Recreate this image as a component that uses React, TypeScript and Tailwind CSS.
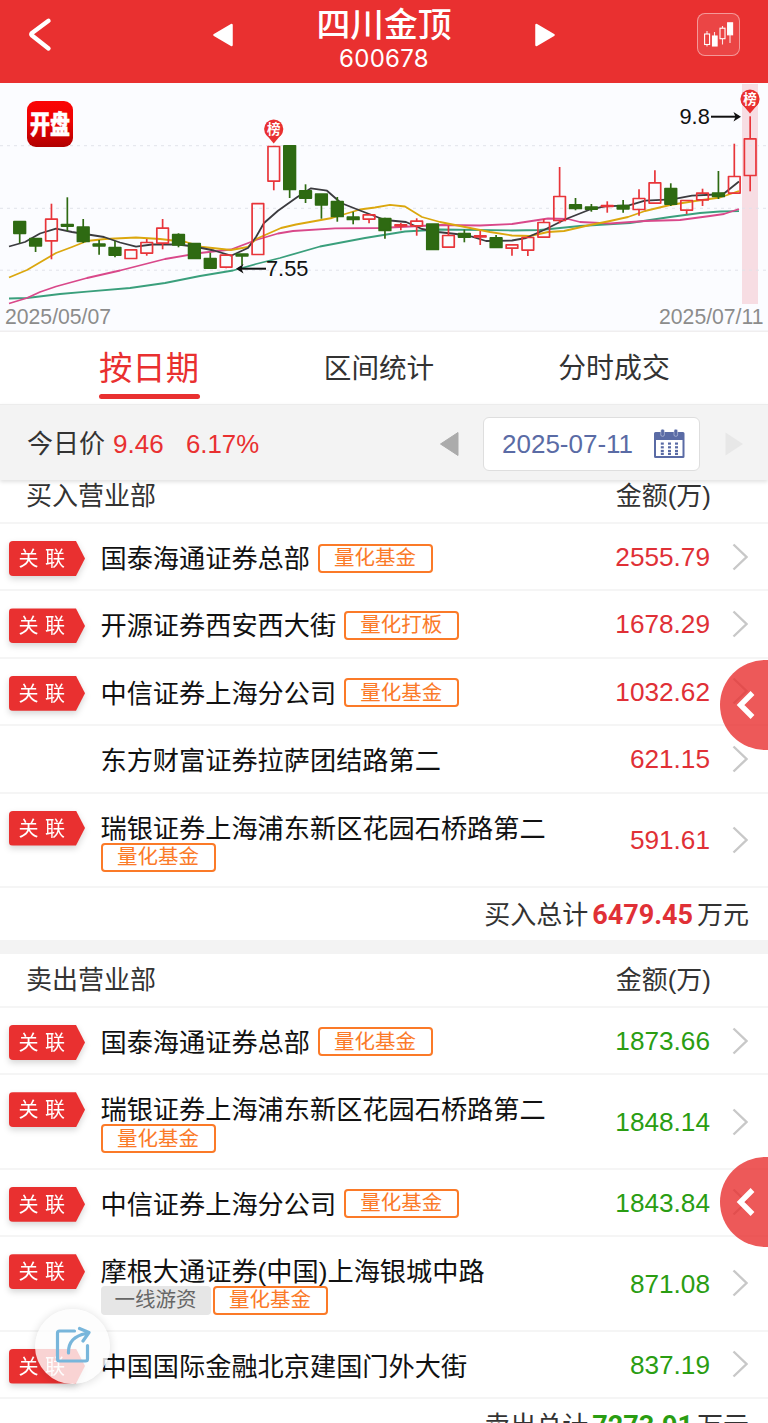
import clsx from "clsx";

type Candle = {
  up: boolean;
  top: number;
  bottom: number;
  high: number;
  low: number;
};

type Tag = { label: string; muted?: boolean };

type Seat = {
  name: string;
  amount: string;
  linked?: boolean;
  tags?: Tag[];
  tall?: boolean;
};

const quant: Tag = { label: "量化基金" };

const buySeats: Seat[] = [
  { name: "国泰海通证券总部", amount: "2555.79", linked: true, tags: [quant] },
  { name: "开源证券西安西大街", amount: "1678.29", linked: true, tags: [{ label: "量化打板" }] },
  { name: "中信证券上海分公司", amount: "1032.62", linked: true, tags: [quant] },
  { name: "东方财富证券拉萨团结路第二", amount: "621.15" },
  { name: "瑞银证券上海浦东新区花园石桥路第二", amount: "591.61", linked: true, tags: [quant], tall: true },
];

const sellSeats: Seat[] = [
  { name: "国泰海通证券总部", amount: "1873.66", linked: true, tags: [quant] },
  { name: "瑞银证券上海浦东新区花园石桥路第二", amount: "1848.14", linked: true, tags: [quant], tall: true },
  { name: "中信证券上海分公司", amount: "1843.84", linked: true, tags: [quant] },
  {
    name: "摩根大通证券(中国)上海银城中路",
    amount: "871.08",
    linked: true,
    tags: [{ label: "一线游资", muted: true }, quant],
    tall: true,
  },
  { name: "中国国际金融北京建国门外大街", amount: "837.19", linked: true },
];

// [up, body top, body bottom, high, low]
const rawCandles: [number, number, number, number, number][] = [
  [0, 221.5, 233.5, 221.5, 243],
  [0, 238.3, 246, 238, 252],
  [1, 219, 241, 203.7, 259.3],
  [0, 224.3, 226.3, 197.3, 231],
  [0, 227, 241.7, 219, 243],
  [0, 244, 246, 240, 254.7],
  [0, 247.3, 255.3, 241, 257.3],
  [1, 249.7, 258.7, 249.7, 258.7],
  [1, 242.3, 253.3, 239, 255.7],
  [1, 228, 243.3, 219, 249.3],
  [0, 234.3, 245, 233.3, 247.3],
  [0, 243.3, 258.7, 243.3, 258.7],
  [0, 258.3, 268.3, 252.7, 268.3],
  [1, 255, 267.3, 255, 268.3],
  [0, 254, 256, 254, 265],
  [1, 203.5, 254.7, 203.5, 254.7],
  [1, 146.3, 181.3, 146.3, 190.3],
  [0, 145.7, 189.7, 145.7, 198],
  [0, 190.7, 198.3, 184.3, 203],
  [0, 194, 205, 194, 218.7],
  [0, 201.3, 216.7, 197, 221.7],
  [0, 217, 219.7, 211.7, 224.3],
  [1, 214.7, 219.3, 214.7, 223.3],
  [0, 218.3, 230.7, 217.7, 238.7],
  [1, 224.7, 226, 223, 230.3],
  [1, 221, 226, 218.3, 235.7],
  [0, 224, 249.7, 224, 249.7],
  [1, 235.3, 247.3, 225.7, 247.3],
  [0, 233.3, 237.3, 229.7, 242.3],
  [1, 235.7, 237, 231, 245],
  [0, 237.7, 247.7, 235, 248],
  [1, 244.6, 248.4, 244.6, 255.7],
  [1, 237.3, 250.3, 237.3, 256],
  [1, 222.3, 237.3, 219, 237.3],
  [1, 196.3, 220.7, 167, 223.3],
  [0, 204.7, 208.7, 198, 210.3],
  [0, 207, 209.3, 204, 211.7],
  [1, 205.3, 206.5, 201.3, 212.7],
  [0, 205.3, 209, 200, 212.7],
  [1, 198.3, 209.7, 189.3, 215.7],
  [1, 182.7, 203.3, 170.3, 203.3],
  [0, 188.3, 204.3, 183.3, 206],
  [1, 200.3, 210.3, 200, 214],
  [1, 193, 200, 188.7, 206],
  [0, 193, 196.7, 171, 199],
  [1, 176.3, 193.3, 143.7, 193.3],
  [1, 138.7, 175.7, 116.3, 191.3],
];

const candles: Candle[] = rawCandles.map(([up, top, bottom, high, low]) => ({
  up: up === 1,
  top,
  bottom,
  high,
  low,
}));

const averages = [
  {
    color: "#3a9f7c",
    points:
      "9,298.5 27,298 60,294 87,291.7 130,288 165,283 200,276 233,270.5 256,264 280,258 320,246.5 365,238 405,231.5 440,229.5 512,230.5 540,230 580,226 630,223 670,217 700,213 720,211.5 739,211.2",
  },
  {
    color: "#d9488a",
    points:
      "9,303.5 27,298 40,292 56,286.5 87,278 120,270.5 165,259 200,253 231,249.5 256,240 278,233.5 293,231 335,228.3 380,228 420,226 440,225 480,225.5 512,224 548,218.5 568,219 580,222 610,223.5 645,221 680,220 710,216 724,214 739,209",
  },
  {
    color: "#dba70e",
    points:
      "9,277.5 27,270 56,253 72,247 87,241 105,239 136,237.5 160,239 186,242 203,247 231,250 248,247 256,239 281,228 296,224.5 332,218 360,209.5 375,207.5 390,204.8 405,206.5 422,217 440,222 465,227 490,232 512,235.5 530,236 548,232 564,231 590,225 610,221 628,217 645,211 670,205 695,201 720,197.5 739,191",
  },
  {
    color: "#3b3b3f",
    points:
      "9,246.5 25,242 40,233.5 56,228.7 72,232 104,237 120,242.5 136,246.7 152,244.5 178,244.5 194,246.5 214,250.5 231,255.7 248,248 256,237 264,223 278,210.7 297,197.3 311,188.3 327,190.7 341,203 360,210.5 385,220 406,222 422,229 438,232 456,234 472,236.7 486,241 512,240.5 526,238 544,230 566,219 590,209.5 605,206.3 629,205.3 645,200.7 672,199.3 692,195.7 716,194.5 724,193.5 739,181.5",
  },
];

function BoardPin({ x, y }: { x: number; y: number }) {
  return (
    <g>
      <path
        d={`M${x - 8} ${y + 5} L${x} ${y + 14.5} L${x + 8} ${y + 5} Z`}
        fill="#e93030"
      />
      <circle cx={x} cy={y} r="9.6" fill="#e93030" />
      <text x={x} y={y + 5} textAnchor="middle" fontSize="13.5" fontWeight="700" fill="#fff">
        榜
      </text>
    </g>
  );
}

function KLineChart() {
  return (
    <svg
      viewBox="0 83 768 249"
      className="block h-[249px] w-full bg-[#fbfcff] font-['Liberation_Sans','Noto_Sans_CJK_SC',sans-serif]"
    >
      <defs>
        <linearGradient id="logo" x1="0" y1="0" x2="0" y2="1">
          <stop offset="0" stopColor="#fb0505" />
          <stop offset="0.45" stopColor="#ee0303" />
          <stop offset="1" stopColor="#b00000" />
        </linearGradient>
      </defs>

      <rect x="742" y="84" width="16" height="220" fill="#f7dde3" />
      {[145.7, 208.3, 270.2].map((y) => (
        <line key={y} x1="0" x2="768" y1={y} y2={y} stroke="#e1e3ea" strokeDasharray="3 4" />
      ))}

      {averages.map((line) => (
        <polyline
          key={line.color}
          points={line.points}
          fill="none"
          stroke={line.color}
          strokeWidth="1.8"
          strokeLinejoin="round"
        />
      ))}

      {candles.map((c, i) => {
        const x = 19.7 + i * 15.88;
        const color = c.up ? "#e8353a" : "#2e6a12";
        return (
          <g key={i} stroke={color} strokeWidth="1.7" strokeLinejoin="round">
            {c.high < c.top && <line x1={x} x2={x} y1={c.high} y2={c.top} />}
            {c.low > c.bottom && <line x1={x} x2={x} y1={c.bottom} y2={c.low} />}
            <rect
              x={x - 5.8}
              y={c.top + 0.2}
              width="11.6"
              height={Math.max(c.bottom - c.top - 0.4, 0.8)}
              fill={c.up ? "none" : color}
            />
          </g>
        );
      })}

      <rect x="27" y="101" width="46" height="46" rx="9" fill="url(#logo)" />
      <text
        x="30"
        y="133.8"
        fontSize="26"
        fontWeight="900"
        fill="#fff"
        stroke="#fff"
        strokeWidth="0.5"
        textLength="40"
        lengthAdjust="spacingAndGlyphs"
      >
        开盘
      </text>

      <BoardPin x={273.7} y={129} />
      <BoardPin x={750} y={99} />

      <g stroke="#111" strokeWidth="2" fill="none">
        <path d="M711 116.7 H739" />
        <path d="M266 268.7 H238" />
      </g>
      <path d="M733.5 112 L741 116.7 L733.5 121.4 L735.5 116.7 Z" fill="#111" />
      <path d="M243.5 264 L236 268.7 L243.5 273.4 L241.5 268.7 Z" fill="#111" />
      <g fontSize="21.8" fill="#111">
        <text x="679.5" y="124">9.8</text>
        <text x="266" y="276">7.55</text>
      </g>
      <g fontSize="21.2" fill="#8c8c8c">
        <text x="5" y="324">2025/05/07</text>
        <text x="763.5" y="324" textAnchor="end">2025/07/11</text>
      </g>
      <line x1="0" x2="768" y1="331.3" y2="331.3" stroke="#f0eeef" strokeWidth="1.4" />
    </svg>
  );
}

function Header() {
  return (
    <header className="grid h-[83px] grid-cols-[200px_1fr_200px] bg-[#e93030] text-white">
      <button className="flex items-start pt-[17px] pl-[27px]">
        <svg width="26" height="35" viewBox="0 0 26 35" fill="none" stroke="#fff" strokeWidth="4.4" strokeLinecap="round" strokeLinejoin="round">
          <path d="M21.5 3.8 L5 16 Q3.5 17.300 5 18.600 L21.5 31.5" />
        </svg>
      </button>
      <div className="flex justify-between px-[13px]">
        <svg width="20" height="24" viewBox="0 0 20 24" className="mt-[23px]">
          <path d="M1.5 12 L18.5 2 V22 Z" fill="#fff" stroke="#fff" strokeWidth="2.5" strokeLinejoin="round" />
        </svg>
        <div className="flex flex-col items-center text-center">
          <h1 className="mt-[3px] h-[42px] text-[33.8px] leading-[44px] font-medium">四川金顶</h1>
          <span className="h-6 font-['Inter','Liberation_Sans',sans-serif] text-[24px] leading-[27px] tracking-[0.3px]">
            600678
          </span>
        </div>
        <svg width="20" height="24" viewBox="0 0 20 24" className="mt-[23px]">
          <path d="M18.5 12 L1.5 2 V22 Z" fill="#fff" stroke="#fff" strokeWidth="2.5" strokeLinejoin="round" />
        </svg>
      </div>
      <div className="flex justify-end pt-[13px] pr-[28px]">
        <div className="h-[43px] w-[43px] rounded-lg border border-white/45 bg-white/10">
          <svg width="41" height="41" viewBox="0 0 41 41" stroke="#fff" strokeWidth="1.1">
            <path d="M9 17 V20 M9 31 V32.5 M16.5 18 V22 M24.5 12 V14 M24.5 25 V30.5 M32 21 V29" opacity=".85" />
            <rect x="6.6" y="20" width="5" height="10.5" fill="none" />
            <rect x="14.5" y="22" width="4.6" height="10" fill="#fff" />
            <rect x="22" y="14.2" width="5" height="10.5" fill="none" />
            <rect x="29.6" y="8.8" width="5" height="12" fill="#fff" />
          </svg>
        </div>
      </div>
    </header>
  );
}

function Tabs() {
  return (
    <nav className="flex h-[72px] text-[#333]">
      <div className="flex w-[298px] justify-center">
        <div className="h-[67px] w-[101px] text-center text-[33.4px] leading-[73px] whitespace-nowrap text-[#e93030]">
          <div className="h-[62px]">按日期</div>
          <div className="h-[5px] rounded-full bg-[#e93030]" />
        </div>
      </div>
      <div className="w-[162px] text-center text-[27.6px] leading-[74px]">区间统计</div>
      <div className="w-[308px] text-center text-[27.9px] leading-[74px]">分时成交</div>
    </nav>
  );
}

function CalendarIcon() {
  return (
    <svg width="32" height="30" viewBox="0 0 32 30" fill="#5a6ba5">
      <path fillRule="evenodd" d="M2.5 3 H30 Q31.5 3 31.5 4.5 V27.500 Q31.5 29 30 29 H2.5 Q1 29 1 27.500 V4.5 Q1 3 2.5 3 Z M3 11 V27 H29.5 V11 Z" />
      <rect x="7.8" y="0.3" width="3.6" height="7" rx="1.5" stroke="#dfe3f0" strokeWidth="0.5" />
      <rect x="21" y="0.3" width="3.6" height="7" rx="1.5" stroke="#dfe3f0" strokeWidth="0.5" />
      {[7.8, 15, 22].map((x) =>
        [13.5, 17.2, 20.9, 23.800].map((y) => (
          <rect key={`${x}-${y}`} x={x} y={y} width="3" height="2.2" />
        ))
      )}
    </svg>
  );
}

function DateBar() {
  return (
    <div className="relative z-10 flex h-[76px] items-center border-t border-[#ececec] bg-[#f3f3f3] pt-0.5 pl-[27px] shadow-[0_2px_4px_rgba(0,0,0,0.12)]">
      <span className="w-[86px] pt-0.5 text-[26px] text-[#333]">今日价</span>
      <span className="w-[73px] pt-0.5 text-[26px] text-[#e93030]">9.46</span>
      <span className="w-[253px] pt-0.5 text-[25.8px] text-[#e93030]">6.17%</span>
      <svg width="20" height="26" viewBox="0 0 20 26">
        <path d="M1.5 13 L19 1.5 V24.5 Z" fill="#ababab" stroke="#ababab" strokeLinejoin="round" />
      </svg>
      <div className="ml-[24px] flex h-[54px] w-[217px] items-center justify-between rounded-md border-[1.5px] border-[#dedede] bg-white pr-[14px] pl-[18px]">
        <span className="pt-0.5 text-[26px] text-[#5a6ba5]">2025-07-11</span>
        <CalendarIcon />
      </div>
      <svg width="20" height="26" viewBox="0 0 20 26" className="ml-[24px]">
        <path d="M19 13 L1.5 1.5 V24.5 Z" fill="#e7e7e7" />
      </svg>
    </div>
  );
}

function SectionTitle({ title, className }: { title: string; className?: string }) {
  return (
    <div
      className={clsx(
        "flex h-[54px] justify-between border-b-2 border-[#f5f5f5] pr-[57px] pl-[26px] text-[26px] leading-[52px] text-[#333]",
        className
      )}
    >
      <span>{title}</span>
      <span>金额(万)</span>
    </div>
  );
}

function LinkedBadge() {
  return (
    <div className="mt-[17px] h-[35px] w-[76px] drop-shadow-[0_3px_3px_rgba(0,0,0,0.16)]">
      <div className="h-full rounded-l bg-[#e93030] pl-[9.5px] text-[20px] leading-[36px] tracking-[6.5px] whitespace-nowrap text-white [clip-path:polygon(0_0,67px_0,100%_50%,67px_100%,0_100%)]">
        关联
      </div>
    </div>
  );
}

function TagLabel({ tag }: { tag: Tag }) {
  return (
    <span
      className={clsx(
        "flex h-[29px] items-center justify-center rounded text-[20.5px] leading-none",
        tag.muted ? "w-[110px] bg-[#e6e6e6] text-[#666]" : "w-[115px] border-2 border-[#fb7a28] bg-white text-[#fb7a28]"
      )}
    >
      {tag.label}
    </span>
  );
}

function SeatRow({ seat, sell }: { seat: Seat; sell?: boolean }) {
  return (
    <div
      className={clsx(
        "flex border-b-2 border-[#f5f5f5] pr-[20px] pl-[9px]",
        seat.tall ? "h-[94.4px]" : "h-[67.4px]"
      )}
    >
      <div className="w-[91.5px]">{seat.linked && <LinkedBadge />}</div>
      <div className="flex w-[480px] flex-wrap content-start items-center gap-x-[7.5px] pt-[19px]">
        <span className="h-[30px] text-[26.2px] leading-[32px] whitespace-nowrap text-[#111]">{seat.name}</span>
        {seat.tags && (
          <div className="flex gap-[2px]">
            {seat.tags.map((tag) => (
              <TagLabel key={tag.label} tag={tag} />
            ))}
          </div>
        )}
      </div>
      <div className="flex flex-1 items-center justify-end">
        <span className={clsx("pt-0.5 text-[26.2px]", sell ? "text-[#2a9d12]" : "text-[#e03036]")}>{seat.amount}</span>
        <svg width="16" height="28" viewBox="0 0 16 28" className="ml-[22px]" fill="none" stroke="#c8c8c8" strokeWidth="2.4">
          <path d="M1.5 1.5 L14.5 14 L1.5 26.5" />
        </svg>
      </div>
    </div>
  );
}

function Total({ label, value, sell }: { label: string; value: string; sell?: boolean }) {
  return (
    <div className="flex h-[52px] items-center justify-end pt-[3px] pr-[19px] text-[26px] text-[#333]">
      <span>{label}</span>
      <span
        className={clsx(
          "mx-[4px] font-['Roboto','Liberation_Sans',sans-serif] text-[27px] font-bold",
          sell ? "text-[#2a9d12]" : "text-[#e03036]"
        )}
      >
        {value}
      </span>
      <span>万元</span>
    </div>
  );
}

function SideHandle({ className }: { className: string }) {
  return (
    <button
      className={clsx("absolute left-[720px] z-20 h-[90px] w-[90px] rounded-full bg-[#e93030]/80", className)}
    >
      <svg width="20" height="30" viewBox="0 0 20 30" className="ml-[16px]" fill="none" stroke="#fff" strokeWidth="5.4">
        <path d="M16.5 3 L4.5 15 L16.5 27" />
      </svg>
    </button>
  );
}

function ShareButton() {
  return (
    <button className="absolute top-[1309px] left-[35px] z-20 flex h-[75px] w-[75px] items-center justify-center rounded-full bg-[#fcfcfc]/80 shadow-[0_1px_10px_rgba(0,0,0,0.14)]">
      <svg width="36" height="38" viewBox="0 0 36 38" className="-mt-1" fill="none" stroke="#78b6db" strokeWidth="3.2" strokeLinecap="round" strokeLinejoin="round">
        <path d="M19.5 5 H4.5 Q2.5 5 2.5 7 V33 Q2.5 35 4.5 35 H30.5 Q32.5 35 32.5 33 V19.5" />
        <path d="M13.5 27 Q13 11 31 7.5 M24.5 2.5 L34 6.5 L28 15" />
      </svg>
    </button>
  );
}

export default function App() {
  return (
    <div className="relative h-[1423px] w-[768px] overflow-hidden bg-white font-['Liberation_Sans','Noto_Sans_CJK_SC',sans-serif]">
      <Header />
      <KLineChart />
      <Tabs />
      <DateBar />

      <SectionTitle title="买入营业部" className="-mt-[10px]" />
      {buySeats.map((seat) => (
        <SeatRow key={seat.name} seat={seat} />
      ))}
      <Total label="买入总计" value="6479.45" />

      <div className="h-[14px] bg-[#f3f3f3]" />

      <SectionTitle title="卖出营业部" />
      {sellSeats.map((seat) => (
        <SeatRow key={seat.name} seat={seat} sell />
      ))}
      <Total label="卖出总计" value="7273.91" sell />

      <SideHandle className="top-[659.5px]" />
      <SideHandle className="top-[1157px]" />
      <ShareButton />
    </div>
  );
}
